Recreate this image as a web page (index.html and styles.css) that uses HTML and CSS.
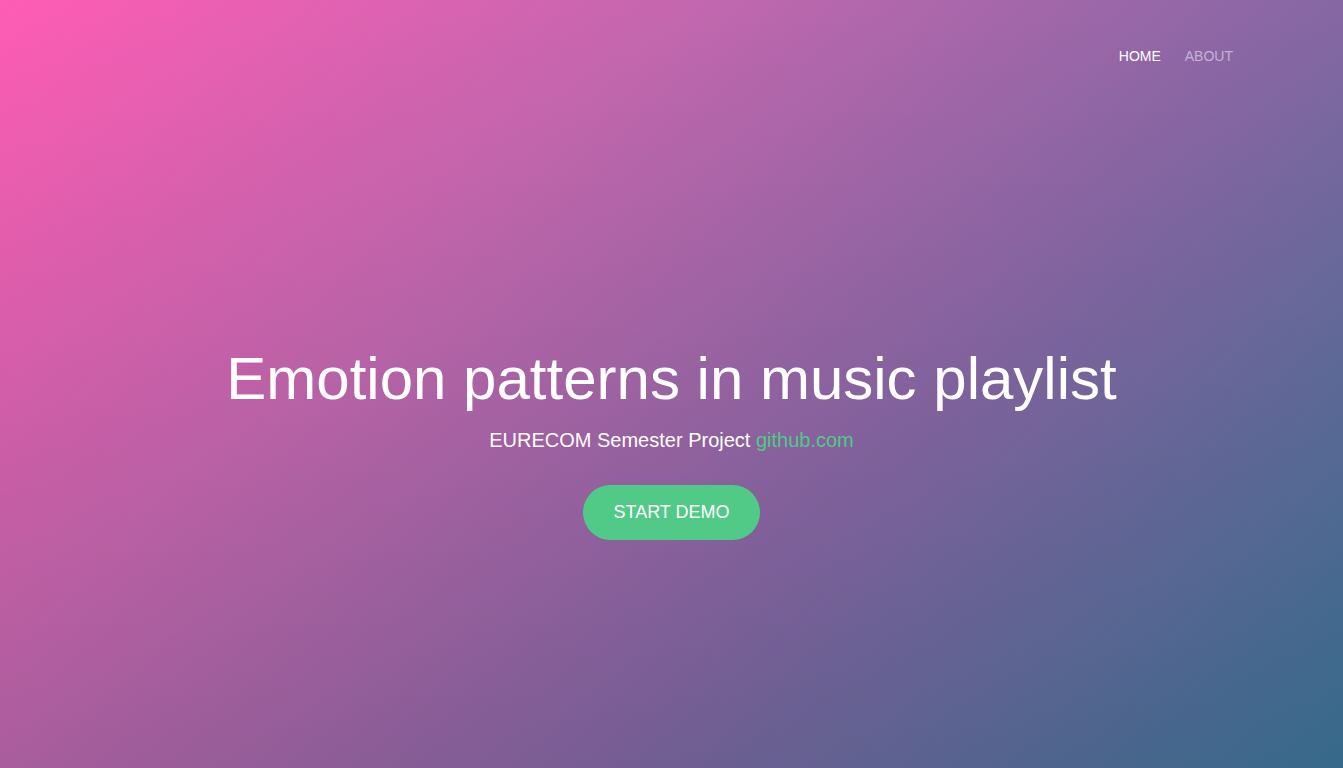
FILE: index.html
```html
<!DOCTYPE html>
<html lang="en">
<head>
<meta charset="utf-8">
<title>Emotion patterns in music playlist</title>
<link rel="stylesheet" href="styles.css">
</head>
<body>
<div class="page">
  <header class="nav">
    <a class="nav-link active" href="#">HOME</a>
    <a class="nav-link" href="#">ABOUT</a>
  </header>
  <main class="hero">
    <h1 class="title">Emotion patterns in music playlist</h1>
    <p class="subtitle">EURECOM Semester Project <a class="gh" href="#">github.com</a></p>
    <a class="btn" href="#">START DEMO</a>
  </main>
</div>
</body>
</html>
```
FILE: styles.css
```css
html, body {
  margin: 0;
  padding: 0;
  height: 100%;
}
body {
  font-family: "Liberation Sans", Arial, sans-serif;
  color: #fff;
}
.page {
  height: 768px;
  background:
    linear-gradient(to bottom, rgba(0, 0, 0, 0), rgba(0, 0, 0, 0.1)),
    linear-gradient(135deg, #ff5cb4 0%, #c367af 33%, #8567a4 64%, #3b7599 100%);
  display: flex;
  flex-direction: column;
}
.nav {
  display: flex;
  justify-content: flex-end;
  gap: 24px;
  padding: 47px 110px 0 0;
  height: 21px;
}
.nav-link {
  font-size: 14px;
  line-height: 18px;
  color: rgba(255, 255, 255, 0.5);
  text-decoration: none;
}
.nav-link.active {
  color: #fff;
}
.hero {
  flex: 1;
  display: flex;
  flex-direction: column;
  align-items: center;
  padding-top: 278px;
}
.title {
  margin: 0;
  font-weight: 400;
  font-size: 60px;
  line-height: 66px;
}
.subtitle {
  margin: 16px 0 0;
  font-size: 20px;
  line-height: 24px;
}
.gh {
  color: #4fcb88;
  text-decoration: none;
}
.btn {
  margin-top: 33px;
  display: inline-flex;
  align-items: center;
  justify-content: center;
  width: 177px;
  height: 55px;
  border-radius: 28px;
  background: #51ca88;
  color: #fff;
  font-size: 18px;
  text-decoration: none;
}
```
